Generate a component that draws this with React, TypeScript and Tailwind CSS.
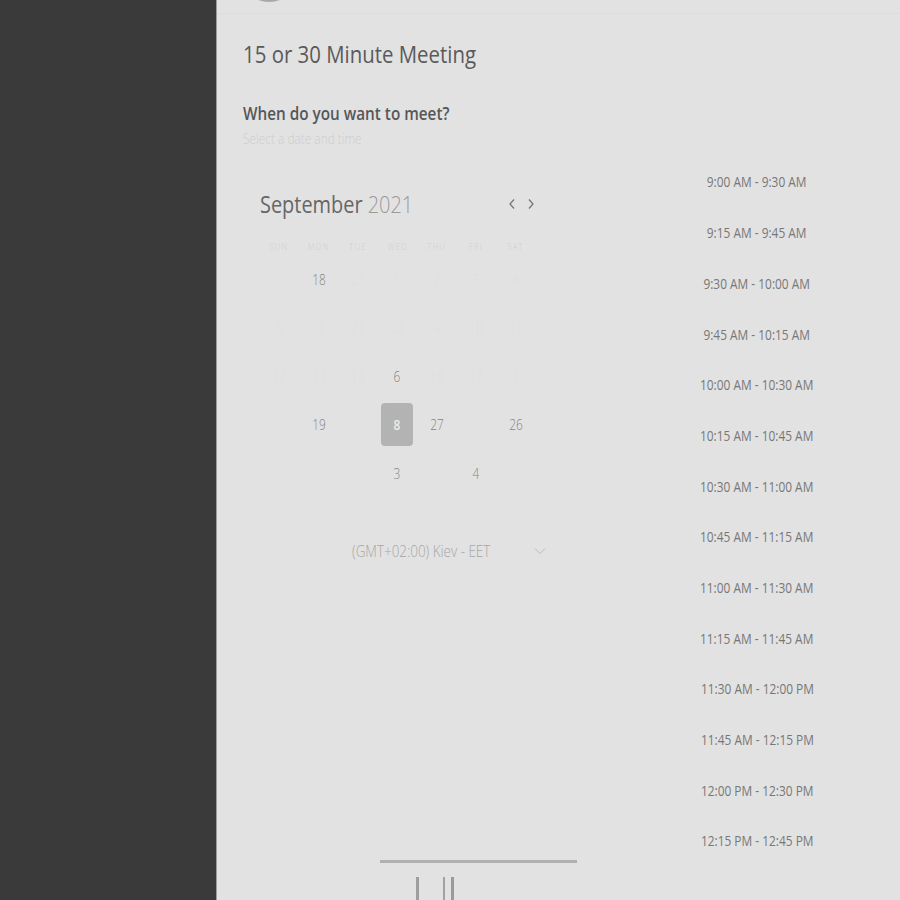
import React from "react";

const times = [
  "9:00 AM - 9:30 AM",
  "9:15 AM - 9:45 AM",
  "9:30 AM - 10:00 AM",
  "9:45 AM - 10:15 AM",
  "10:00 AM - 10:30 AM",
  "10:15 AM - 10:45 AM",
  "10:30 AM - 11:00 AM",
  "10:45 AM - 11:15 AM",
  "11:00 AM - 11:30 AM",
  "11:15 AM - 11:45 AM",
  "11:30 AM - 12:00 PM",
  "11:45 AM - 12:15 PM",
  "12:00 PM - 12:30 PM",
  "12:15 PM - 12:45 PM",
];

const days = ["SUN", "MON", "TUE", "WED", "THU", "FRI", "SAT"];

type Cell = { n: string; v?: boolean; sel?: boolean };

const rows: Cell[][] = [
  [{ n: "" }, { n: "18", v: true }, { n: "25" }, { n: "1" }, { n: "2" }, { n: "3" }, { n: "4" }],
  [{ n: "5" }, { n: "20" }, { n: "21" }, { n: "22" }, { n: "9" }, { n: "10" }, { n: "11" }],
  [{ n: "12" }, { n: "13" }, { n: "14" }, { n: "6", v: true }, { n: "16" }, { n: "17" }, { n: "1" }],
  [{ n: "" }, { n: "19", v: true }, { n: "" }, { n: "8", sel: true }, { n: "27", v: true }, { n: "" }, { n: "26", v: true }],
  [{ n: "" }, { n: "" }, { n: "" }, { n: "3", v: true }, { n: "" }, { n: "4", v: true }, { n: "" }],
];

export default function App() {
  return (
    <div
      className="w-[900px] h-[900px] flex overflow-hidden bg-[#e2e2e2]"
      style={{ fontFamily: '"Open Sans", "Noto Sans", sans-serif' }}
    >
      <aside className="w-[217px] shrink-0 h-full bg-[#3a3a3a] border-r border-[#9c9c9c]" />
      <main className="flex-1 flex flex-col">
        <div className="h-[14px] shrink-0 border-b border-[#dcdcdc]">
          <div className="w-[62px] h-[62px] rounded-full bg-[#a9a9a9] -mt-[60px] ml-[21px]" />
        </div>
        <div className="pl-[26px] flex flex-col">
          <h1 className="mt-[24px] h-[32px] leading-[32px] text-[24px] text-[#5a5a5a] font-normal">
            <span className="inline-block origin-left scale-x-[0.85]">15 or 30 Minute Meeting</span>
          </h1>
          <h2 className="mt-[31px] h-[24px] leading-[24px] text-[18px] font-semibold text-[#575757]">
            <span className="inline-block origin-left scale-x-[0.85]">When do you want to meet?</span>
          </h2>
          <p className="mt-[5px] h-[18px] leading-[18px] text-[14px] font-light text-[#cecece]">
            <span className="inline-block origin-left scale-x-[0.85]">Select a date and time</span>
          </p>
          <div className="flex">
            <div className="w-[371px] shrink-0 pt-[40px] flex flex-col">
              <div className="ml-[16.5px] w-[276px]">
                <div className="h-[32px] flex items-center justify-between">
                  <div className="text-[24px] leading-[32px] whitespace-nowrap">
                    <span className="inline-block origin-left scale-x-[0.83]">
                      <span className="text-[#666666]">September</span>{" "}
                      <span className="text-[#9a9a9a] font-light">2021</span>
                    </span>
                  </div>
                  <div className="flex items-center gap-[11px] pr-[1px]">
                    <svg width="8" height="12" viewBox="0 0 8 12" fill="none">
                      <path d="M6 1.5 L2 6 L6 10.5" stroke="#777" strokeWidth="1.3" />
                    </svg>
                    <svg width="8" height="12" viewBox="0 0 8 12" fill="none">
                      <path d="M2 1.5 L6 6 L2 10.5" stroke="#777" strokeWidth="1.3" />
                    </svg>
                  </div>
                </div>
                <div className="mt-[19px] h-[16px] grid grid-cols-7">
                  {days.map((d) => (
                    <div key={d} className="flex items-center justify-center text-[9px] font-light tracking-[0.14em] text-[#d0d0d0]">
                      <span className="inline-block scale-x-[0.85]">{d}</span>
                    </div>
                  ))}
                </div>
                <div className="flex flex-col">
                  {rows.map((r, i) => (
                    <div key={i} className="grid grid-cols-7 h-[48.5px]">
                      {r.map((c, j) => (
                        <div key={j} className="flex items-center justify-center">
                          {c.sel ? (
                            <div className="w-[32px] h-[43px] rounded-[4px] bg-[#b3b3b3] flex items-center justify-center text-[14px] font-semibold text-[#ececec]">
                              <span className="inline-block scale-x-[0.85]">{c.n}</span>
                            </div>
                          ) : (
                            <span
                              className={
                                c.v
                                  ? "inline-block scale-x-[0.85] text-[14px] font-light text-[#858585]"
                                  : "inline-block scale-x-[0.85] text-[14px] font-light text-[#dfdfdf]"
                              }
                            >
                              {c.n}
                            </span>
                          )}
                        </div>
                      ))}
                    </div>
                  ))}
                </div>
              </div>
              <div className="mt-[43px] ml-[109px] w-[194px] h-[20px] flex items-center justify-between">
                <span className="inline-block origin-left scale-x-[0.84] text-[16px] leading-[20px] font-light text-[#a6a6a6] whitespace-nowrap">
                  (GMT+02:00) Kiev - EET
                </span>
                <svg width="12" height="8" viewBox="0 0 12 8" fill="none">
                  <path d="M1 1.5 L6 6.5 L11 1.5" stroke="#bdbdbd" strokeWidth="1" />
                </svg>
              </div>
              <div className="mt-[299px] ml-[137px] w-[197px] h-[3px] bg-[#b0b0b0]" />
              <div className="mt-[14px] ml-[173px] flex h-[30px]">
                <div className="w-[3px] h-full bg-[#9e9e9e]" />
                <div className="ml-[24px] w-[2px] h-full bg-[#a2a2a2]" />
                <div className="ml-[6px] w-[3px] h-full bg-[#9a9a9a]" />
              </div>
            </div>
            <div className="flex-1 pt-[8.6px] flex flex-col">
              {times.map((t) => (
                <div key={t} className="h-[50.7px] flex items-center justify-center">
                  <span className="inline-block scale-x-[0.85] text-[14px] text-[#777777] whitespace-nowrap">{t}</span>
                </div>
              ))}
            </div>
          </div>
        </div>
      </main>
    </div>
  );
}
